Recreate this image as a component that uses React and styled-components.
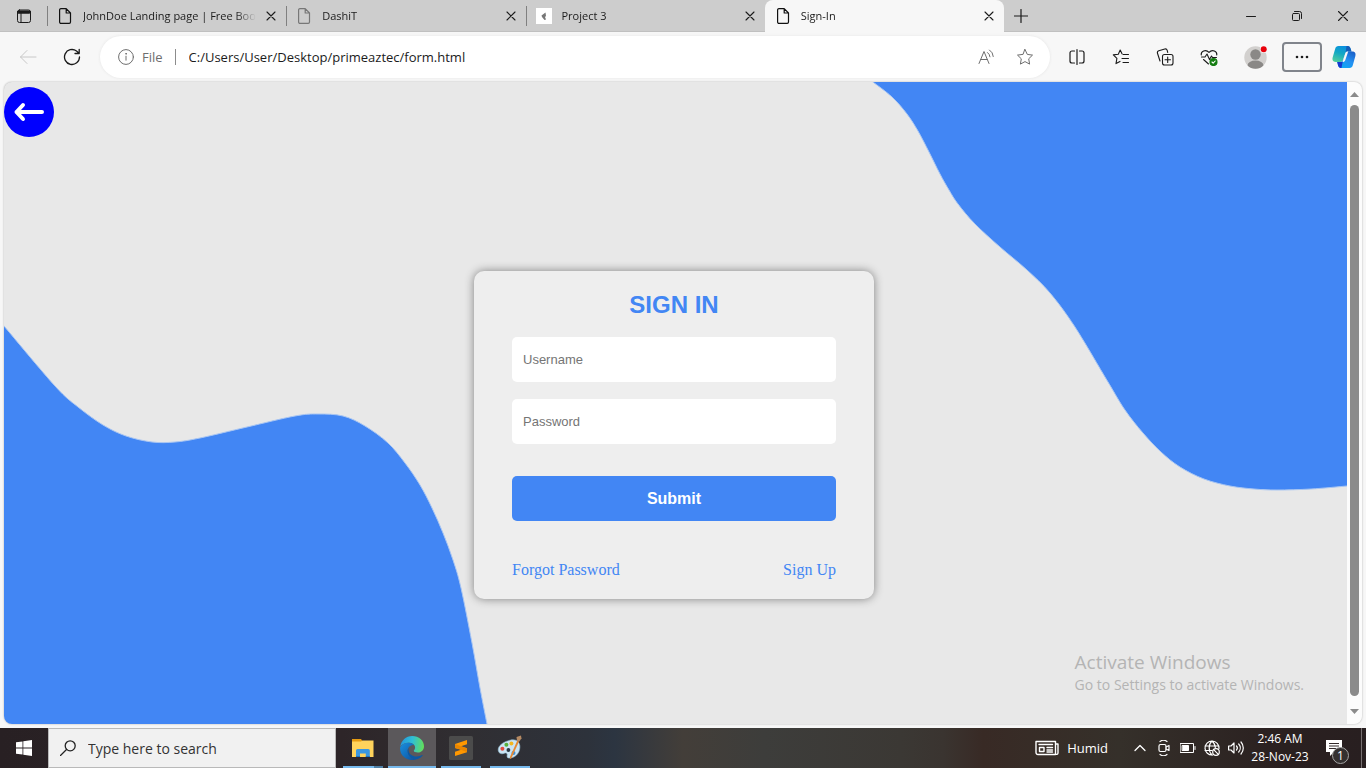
import React from "react";
import styled, { createGlobalStyle, css } from "styled-components";

const ui = '"Open Sans", "Noto Sans", sans-serif';
const arial = '"Liberation Sans", Arial, sans-serif';
const serif = '"Liberation Serif", "Times New Roman", serif';
const blue = "#4286f4";

const GlobalStyle = createGlobalStyle`
  *, *::before, *::after { box-sizing: border-box; }
  body { margin: 0; font-family: ${ui}; color: #1b1b1b; }
  button, input { font: inherit; color: inherit; border: 0; background: none; padding: 0; margin: 0; outline: 0; }
  svg { display: block; flex: none; }
`;

const Desktop = styled.div`
  min-height: 100vh;
  display: flex;
  flex-direction: column;
  background: #f7f7f7;
`;

/* ---------- tab strip ---------- */
const TabStrip = styled.header`
  display: flex;
  height: 32px;
  background: #cdcdcd;
  box-shadow: inset 0 -1px 0 #c0c0c0;
`;

const IconButton = styled.button`
  display: flex;
  flex: none;
  align-items: center;
  justify-content: center;
  width: ${(p) => p.$width || 44}px;
  color: ${(p) => p.$color || "#1b1b1b"};
`;

const TabList = styled.nav`
  display: flex;
  flex: 0 1 957px;
  min-width: 0;
`;

const TabItem = styled.div`
  position: relative;
  display: flex;
  align-items: center;
  flex: 1 1 0;
  min-width: 0;
  padding: 0 10px;
  gap: 10px;
  font-size: 11px;
  ${(p) =>
    p.$active
      ? css`
          background: #f7f7f7;
          border-radius: 8px 8px 0 0;
        `
      : css`
          &::before {
            content: "";
            position: absolute;
            left: 0;
            top: 6px;
            height: 20px;
            width: 1px;
            background: #808080;
          }
        `}
`;

const TabTitle = styled.span`
  flex: 1;
  min-width: 0;
  overflow: hidden;
  white-space: nowrap;
  line-height: 16px;
  mask-image: linear-gradient(to right, #000 calc(100% - 20px), transparent);
`;

const TabClose = styled.button`
  display: flex;
  align-items: center;
  justify-content: center;
  width: 10px;
  height: 16px;
`;

const Favicon = styled.span`
  display: flex;
  width: 16px;
  height: 16px;
  justify-content: center;
  background: #fff;
`;

const WindowControls = styled.div`
  display: flex;
  margin-left: auto;
`;

/* ---------- toolbar ---------- */
const Toolbar = styled.div`
  display: flex;
  align-items: stretch;
  height: 50px;
  padding: 4px 10px 4px 6px;
`;

const AddressBar = styled.label`
  display: flex;
  flex: 1;
  min-width: 0;
  align-items: center;
  margin: 0 5px 0 6px;
  padding: 0 6px 0 18px;
  border-radius: 21px;
  background: #fff;
  box-shadow: 0 0 3px #e4e4e4;
  font-size: 13px;
`;

const Scheme = styled.span`
  margin: 0 12px 0 8px;
  color: #6e6e6e;
`;

const Divider = styled.span`
  width: 1px;
  height: 16px;
  margin-right: 13px;
  background: #8c8c8c;
`;

const AddressInput = styled.input`
  flex: 1;
  min-width: 0;
`;

const MenuButton = styled.button`
  display: flex;
  align-items: center;
  justify-content: center;
  align-self: center;
  width: 40px;
  height: 30px;
  margin: 0 10px 0 4px;
  border: 2px solid #80848b;
  border-radius: 4px;
`;

/* ---------- web page ---------- */
const Viewport = styled.div`
  display: flex;
  flex: 1;
  position: relative;
  margin: 0 4px 4px;
  border-radius: 8px;
  overflow: hidden;
  background: #e8e8e8;
  box-shadow: 0 0 2px #a8a8a8;
`;

const Page = styled.main`
  position: relative;
  display: flex;
  flex: 1;
  flex-direction: column;
  align-items: center;
  min-width: 0;
  padding: 5px 3px 125px 0;
`;

const Waves = styled.svg`
  position: absolute;
  inset: 0;
  width: 100%;
  height: 100%;
`;

const BackLink = styled.a`
  position: relative;
  display: flex;
  align-items: center;
  justify-content: center;
  align-self: flex-start;
  width: 50px;
  height: 50px;
  border-radius: 50%;
  background: #0000ff;
`;

const Card = styled.form`
  position: relative;
  display: flex;
  flex-direction: column;
  width: 100%;
  max-width: 400px;
  margin-top: 134px;
  padding: 20px 38px;
  border-radius: 10px;
  background: #eee;
  box-shadow: 0 0 10px #808080;
`;

const Title = styled.h1`
  margin: 0 0 18px;
  font: bold 24px/28px ${arial};
  text-align: center;
  color: ${blue};
`;

const Field = styled.input`
  height: 45px;
  margin-bottom: 17px;
  padding: 0 11px;
  border-radius: 5px;
  background: #fff;
  font: 13px ${arial};
  &::placeholder { color: #757575; opacity: 1; }
`;

const Submit = styled.button`
  height: 45px;
  margin-top: 15px;
  border-radius: 5px;
  background: ${blue};
  color: #fff;
  font: bold 16px ${arial};
`;

const Links = styled.div`
  display: flex;
  justify-content: space-between;
  margin-top: 40px;
  font: 16px/18px ${serif};
`;

const TextLink = styled.a`
  color: ${blue};
  text-decoration: none;
`;

const Scrollbar = styled.div`
  display: flex;
  flex-direction: column;
  align-items: center;
  justify-content: space-between;
  width: 15px;
  padding: 10px 0;
  background: #fcfcfc;
`;

const Thumb = styled.span`
  flex: 1;
  width: 9px;
  margin: 8px 0 13px;
  border-radius: 5px;
  background: #8b8b8b;
`;

const Watermark = styled.aside`
  position: absolute;
  right: 58px;
  bottom: 29px;
  color: #b4b4b4;
  font-size: 14px;
  line-height: 20px;
`;

const WatermarkTitle = styled.div`
  font-size: 19px;
  line-height: 26px;
`;

/* ---------- taskbar ---------- */
const Taskbar = styled.footer`
  display: flex;
  height: 40px;
  color: #fff;
  background: linear-gradient(90deg, #282023 0%, #2d2528 25%, #302e32 34%, #2d323b 43%, #2c3541 45%, #433e39 50%, #3d3d3b 56%, #3b3834 66%, #3a3430 69%, #382a25 72%, #35302a 82%, #2a2020 94%, #281f20 100%);
`;

const SearchBox = styled.label`
  display: flex;
  flex: 0 1 288px;
  min-width: 0;
  align-items: center;
  gap: 12px;
  padding: 0 11px;
  border: 1px solid #b9b9b9;
  background: #f1f1f1;
  color: #222;
  font-size: 14px;
`;

const SearchInput = styled.input`
  flex: 1;
  min-width: 0;
  &::placeholder { color: #333; opacity: 1; }
`;

const Apps = styled.nav`
  display: flex;
  gap: 1px;
  margin-left: 3px;
`;

const AppButton = styled.button`
  display: flex;
  position: relative;
  align-items: center;
  justify-content: center;
  width: 48px;
  background: ${(p) => (p.$active ? "#5b585b" : "transparent")};
  &::after {
    content: "";
    position: absolute;
    bottom: 0;
    left: ${(p) => (p.$active ? 0 : 4)}px;
    right: ${(p) => (p.$active ? 0 : 4)}px;
    height: 2px;
    background: ${(p) => (p.$stacked ? "linear-gradient(90deg, #76b9ed 78%, #4f80a6 78%)" : "#76b9ed")};
  }
`;

const Tray = styled.div`
  display: flex;
  align-items: center;
  margin-left: auto;
  padding-right: 4px;
`;

const Weather = styled.button`
  display: flex;
  align-items: center;
  gap: 8px;
  margin-right: 20px;
  font-size: 13px;
`;

const Clock = styled.time`
  width: 64px;
  font-size: 12px;
  line-height: 18px;
  text-align: center;
  white-space: nowrap;
`;

const Notifications = styled.button`
  position: relative;
  display: flex;
  align-items: center;
  justify-content: center;
  width: 48px;
  height: 40px;
  padding-right: 8px;
  margin-left: 2px;
  border-right: 1px solid #777071;
`;

const Badge = styled.span`
  position: absolute;
  left: 18px;
  bottom: 4px;
  width: 17px;
  height: 17px;
  border: 1px solid #a5a5a5;
  border-radius: 50%;
  background: #343030;
  font-size: 12px;
  line-height: 15px;
`;

/* ---------- drawings ---------- */
const Line = ({ w = 16, h = 16, s = 1, children, ...rest }) => (
  <svg width={w} height={h} viewBox={`0 0 ${w} ${h}`} fill="none" stroke="currentColor" strokeWidth={s} strokeLinecap="round" strokeLinejoin="round" aria-hidden="true" {...rest}>
    {children}
  </svg>
);

const DocIcon = ({ color = "#111" }) => (
  <Line color={color} s={1.2}>
    <path d="M4 .7h5.2L13.500 5v9a1.300 1.300 0 0 1-1.300 1.300H4A1.300 1.300 0 0 1 2.600 14V2A1.300 1.300 0 0 1 4 .7ZM9.200 .9V5h4.200" />
  </Line>
);

const CloseIcon = ({ size = 8 }) => (
  <Line w={10} h={10} s={1.1}>
    <path d={size === 8 ? "M1 1l8 8M9 1l-8 8" : "M.5 .5l9 9M9.500 .5l-9 9"} />
  </Line>
);

const CopilotIcon = () => (
  <svg width="24" height="24" viewBox="0 0 24 24" aria-hidden="true">
    <defs>
      <linearGradient id="cpa" x1=".6" y1="0" x2=".2" y2="1">
        <stop offset="0" stopColor="#0a8fe0" />
        <stop offset=".45" stopColor="#12a7c4" />
        <stop offset="1" stopColor="#53cf9c" />
      </linearGradient>
      <linearGradient id="cpb" x1=".8" y1="0" x2=".2" y2="1">
        <stop offset="0" stopColor="#1b61c9" />
        <stop offset=".5" stopColor="#2390f2" />
        <stop offset="1" stopColor="#0ca9f4" />
      </linearGradient>
    </defs>
    <path d="M6.500 1h9.300c1.600 0 2.200 1 2.700 2.500l1 3h-3.700c-1.500 0-2.200.9-2.700 2.500l-1.800 5.500c-.5 1.600-1.300 2.500-2.900 2.500H3.600C.8 17 0 14.800.7 12.300L3.200 3.700C3.700 2 4.700 1 6.500 1Z" fill="url(#cpa)" />
    <path d="M14.500 1h1.300c1.600 0 2.200 1 2.700 2.500l1 3h-3.700c-1 0-1.700.5-2.200 1.300Z" fill="#155eb8" />
    <path d="M17.500 23H9c-1.700 0-2.400-1-2.900-2.500L5.200 17h3.200c1.600 0 2.400-.9 2.900-2.500L13.100 9c.5-1.600 1.200-2.500 2.700-2.500h4.600c2.800 0 3.600 2.200 2.900 4.700l-2.500 9.100c-.5 1.700-1.500 2.700-3.300 2.700Z" fill="url(#cpb)" />
    <path d="M5.200 17h3.200c1.200 0 2-.5 2.500-1.500L9.500 23H9c-1.700 0-2.400-1-2.900-2.500Z" fill="#1638cf" />
    <path d="M10.500 17 13.200 8.500c.4-1.200 1-2 2.300-2h.7l-2.900 8.500c-.5 1.400-1.300 2-2.800 2Z" fill="#f7f7f7" />
  </svg>
);

const WindowsLogo = () => (
  <svg width="16" height="16" viewBox="0 0 16 16" fill="#fff" aria-hidden="true">
    <path d="M0 2.300 6.500 1.400v6.200H0ZM7.300 1.300 16 0v7.600H7.300ZM0 8.400h6.500v6.200L0 13.700ZM7.300 8.400H16V16l-8.700-1.300Z" />
  </svg>
);

const ExplorerIcon = () => (
  <svg width="24" height="24" viewBox="0 0 24 24" aria-hidden="true">
    <path d="M1 3h9l1.500 2H22v6H1Z" fill="#e59b12" />
    <path d="M1 5.500h9L11.500 4.500H22.500V21H1Z" fill="#ffd35c" />
    <path d="M5 21v-6.500A1.500 1.500 0 0 1 6.500 13h10.800a1.500 1.500 0 0 1 1.500 1.500V21h-4v-3.500H9V21Z" fill="#3a97e0" />
    <path d="M5 20h4v1H5zM14.800 20h4v1h-4z" fill="#1b74c4" />
  </svg>
);

const EdgeIcon = () => (
  <svg width="24" height="24" viewBox="0 0 24 24" aria-hidden="true">
    <defs>
      <linearGradient id="eg" x1="0" y1=".4" x2="1" y2=".5">
        <stop offset="0" stopColor="#2396dc" />
        <stop offset=".5" stopColor="#30bfd5" />
        <stop offset="1" stopColor="#63df59" />
      </linearGradient>
      <linearGradient id="ed" x1="0" y1="0" x2="1" y2="1">
        <stop offset="0" stopColor="#1a8fdd" />
        <stop offset="1" stopColor="#0b4f9e" />
      </linearGradient>
    </defs>
    <path d="M.2 11C1 4.600 6 0 12.200 0 19 0 24 4.700 24 10.200c0 4-3 6.300-6.200 6.300-2.600 0-4-.8-4-1.700 0-.6 1.300-1.300 1.300-3.300C15.100 8.500 12 6.800 8.500 6.800 4.500 6.800 1.600 8.500.2 11Z" fill="url(#eg)" />
    <path d="M.1 11.400C1.600 8.400 4.800 6.700 8.400 6.700c2.400 0 4.400.8 5.600 2.200C10.700 8.700 7.600 11 7.600 14.700c0 4.600 3.700 9 9.200 8.300C15.500 23.600 13.900 24 12 24 5 24-.4 18.500.1 11.400Z" fill="url(#ed)" />
    <path d="M8.900 12.200c-1.700 5.100 3.300 8.500 7.900 8.300 2.200-.1 4-.9 5.300-1.500.5-.2.800.2.500.6-1 1.400-2.700 2.800-4.900 3.500C12.300 24.300 7.600 19.800 7.600 14.900c0-1 .5-2 1.300-2.700Z" fill="#0c59a4" />
  </svg>
);

const SublimeIcon = () => (
  <svg width="24" height="24" viewBox="0 0 24 24" aria-hidden="true">
    <rect width="24" height="24" rx="1.500" fill="#4b4b4b" />
    <path d="M6 8 18 4v4.300l-6 2 6 1.900v4.100L6 20v-4.200l6-2-6-1.900Z" fill="#ff9800" />
    <path d="m6 11.900 6 1.900 6 2.300v-3.900l-6-1.900-6-2.300Z" fill="#e98600" />
  </svg>
);

const PaintIcon = () => (
  <svg width="26" height="26" viewBox="0 0 26 26" aria-hidden="true">
    <path d="M13 5.200c6-1.600 10 1.600 9.900 6.800-.1 6.500-5.300 11.300-11 11.100-2-.1-2-1.600-1.700-3 .3-1.700-1-2.600-2.700-1.900-2.500 1-5.500.8-6.200-2.400C.3 10.900 6.300 6.800 13 5.200Z" fill="#cbe5f4" stroke="#8fb8d0" strokeWidth=".6" />
    <circle cx="5.400" cy="13.700" r="2" fill="#e24b3e" />
    <circle cx="9.400" cy="9.800" r="2" fill="#58b13c" />
    <circle cx="14.400" cy="8.600" r="2" fill="#f3b61f" />
    <circle cx="11.400" cy="15" r="1.900" fill="#2b3945" />
    <circle cx="16.500" cy="18" r="2" fill="#3b8fda" />
    <path d="M20.300 5.500 22 6.400 14.500 23l-1.700 1.200.2-2.200Z" fill="#e58a35" />
    <path d="M19.500 2 24 .5l.5 2.700-2.300 3.600-2.200-1.100Z" fill="#b58a63" />
  </svg>
);

/* Turns a list of points into one smooth cubic curve. */
const smooth = (pts) =>
  pts.slice(0, -1).reduce((d, p, i) => {
    const a = pts[i - 1] || p;
    const n = pts[i + 1];
    const b = pts[i + 2] || n;
    return `${d}C${p[0] + (n[0] - a[0]) / 6} ${p[1] + (n[1] - a[1]) / 6} ${n[0] - (b[0] - p[0]) / 6} ${n[1] - (b[1] - p[1]) / 6} ${n[0]} ${n[1]}`;
  }, `M${pts[0][0]} ${pts[0][1]}`);

const leftWave = [[0, 244], [51, 304], [74, 325], [99, 343], [122, 354], [148, 360], [171, 360], [196, 356], [243, 345], [291, 334], [314, 332], [339, 334], [361, 344], [384, 361], [401, 381], [416, 403], [428, 426], [439, 451], [449, 478], [457, 506], [468, 561], [476, 606], [483, 642]];
const rightWave = [[869, 0], [888, 15], [903, 32], [914, 49], [925, 70], [936, 92], [945, 108], [954, 122], [971, 142], [996, 165], [1023, 188], [1046, 211], [1071, 245], [1104, 300], [1121, 328], [1139, 351], [1157, 370], [1176, 385], [1200, 397], [1226, 404], [1250, 407], [1273, 408], [1307, 407], [1343, 404]];

const tabs = [
  { title: "JohnDoe Landing page | Free Boo", icon: <DocIcon /> },
  { title: "DashiT", icon: <DocIcon color="#777" /> },
  {
    title: "Project 3",
    icon: (
      <Favicon>
        <svg width="16" height="16" viewBox="0 0 16 16"><path d="m9.500 4.500-4 3 .5 1.500 2.500 3 1.500-.5-1-2.500 1-1Z" fill="#777" /></svg>
      </Favicon>
    ),
  },
  { title: "Sign-In", icon: <DocIcon />, active: true },
];

export default function App() {
  return (
    <Desktop>
      <GlobalStyle />
      <TabStrip>
        <IconButton $width={47} aria-label="Tab actions">
          <Line><rect x="1.500" y="2" width="13" height="12.500" rx="2" /><path d="M1.500 3.500h13M2 5h12M5 5v9" /><path d="M2.500 3h11v2h-11z" fill="currentColor" /></Line>
        </IconButton>
        <TabList aria-label="Open tabs">
          {tabs.map((t) => (
            <TabItem key={t.title} $active={t.active}>
              {t.icon}
              <TabTitle>{t.title}</TabTitle>
              <TabClose aria-label={`Close ${t.title}`}><CloseIcon /></TabClose>
            </TabItem>
          ))}
        </TabList>
        <IconButton $width={34} aria-label="New tab">
          <Line w={14} h={14} s={1.2}><path d="M7 .5v13M.5 7h13" /></Line>
        </IconButton>
        <WindowControls>
          <IconButton $width={46} aria-label="Minimize"><Line w={10} h={10}><path d="M.5 5.500h9" /></Line></IconButton>
          <IconButton $width={46} aria-label="Restore">
            <Line w={10} h={10}><rect x=".5" y="2.500" width="7" height="7" rx="1" /><path d="M2.500 .5h5a2 2 0 0 1 2 2v5" /></Line>
          </IconButton>
          <IconButton $width={46} aria-label="Close window"><CloseIcon size={9} /></IconButton>
        </WindowControls>
      </TabStrip>

      <Toolbar>
        <IconButton aria-label="Back" $color="#c8c8c8"><Line w={18}><path d="M17 8H1.500M8 1.500 1.500 8 8 14.500" /></Line></IconButton>
        <IconButton aria-label="Refresh">
          <Line w={18} h={18} s={1.3}><path d="M16.500 9A7.500 7.500 0 1 1 13.500 3L16 5.200M16.200 1.300v4.200H12" /></Line>
        </IconButton>
        <AddressBar>
          <Line color="#6e6e6e"><circle cx="8" cy="8" r="7.400" /><path d="M8 7.200v4" /><circle cx="8" cy="4.800" r=".4" /></Line>
          <Scheme>File</Scheme>
          <Divider />
          <AddressInput aria-label="Address" defaultValue="C:/Users/User/Desktop/primeaztec/form.html" />
          <IconButton aria-label="Read aloud" $width={39} $color="#6e6e6e">
            <Line><path d="m1 14.500 5-12 5 12M2.700 10.500h6.500M9.500 3.500a6 6 0 0 1 2.500 4.300M11.500 1a8.500 8.500 0 0 1 3.800 6.500" /></Line>
          </IconButton>
          <IconButton aria-label="Add to favorites" $width={39} $color="#6e6e6e">
            <Line w={18} h={18}><path d="m9 1.500 2.300 4.900 5.200.7-3.800 3.700.9 5.300L9 13.600l-4.600 2.500.9-5.300L1.500 7.100l5.200-.7Z" /></Line>
          </IconButton>
        </AddressBar>
        <IconButton aria-label="Split screen">
          <Line w={18} h={18} s={1.2}><path d="M6.500 3H4a2 2 0 0 0-2 2v8a2 2 0 0 0 2 2h2.500M11.500 3H14a2 2 0 0 1 2 2v8a2 2 0 0 1-2 2h-2.500M9 1.500v15" /></Line>
        </IconButton>
        <IconButton aria-label="Favorites">
          <Line w={18} h={18} s={1.1}><path d="M10 5.800 8.200 2 6.300 6.200l-5 .7 3.600 3.500-.9 5.200 4-2.200M11 6.500h5.500M10 10.500h6.500M11 14.500h5.500" /></Line>
        </IconButton>
        <IconButton aria-label="Collections">
          <Line w={18} h={18} s={1.1}><rect x="6.500" y="6.500" width="10.500" height="10.500" rx="2" /><path d="M11.700 9v5.500M9 11.700h5.500M4 13 1.400 5A2 2 0 0 1 2.800 2.700l6-1.700a2 2 0 0 1 2.400 1.400l.5 2" /></Line>
        </IconButton>
        <IconButton aria-label="Browser essentials">
          <Line w={18} h={18} s={1.1}>
            <path d="M1.200 7C.8 3.500 5.500.8 9 4.300 12.500.8 17.200 3.500 16.800 7M1.500 9H5l2-3 2.500 5.500L11.500 8l1 1.500h4M3.500 11.500 8.500 16" />
            <circle cx="13.500" cy="14" r="3.500" fill="#137c10" stroke="#137c10" /><path d="m12 14 1.200 1.200 2-2.200" stroke="#fff" />
          </Line>
        </IconButton>
        <IconButton aria-label="Profile" $width={47}>
          <svg width="24" height="24" viewBox="-1 0 24 24">
            <clipPath id="pf"><circle cx="11.500" cy="12.500" r="11.200" /></clipPath>
            <g clipPath="url(#pf)"><rect width="24" height="24" fill="#d2d0ce" /><circle cx="11.500" cy="9.500" r="5.200" fill="#8a8886" /><ellipse cx="11.500" cy="20.500" rx="8" ry="5" fill="#8a8886" /></g>
            <circle cx="19.700" cy="4.200" r="3.700" fill="#f7f7f7" /><circle cx="19.700" cy="4.200" r="3" fill="#e8000b" />
          </svg>
        </IconButton>
        <MenuButton aria-label="Settings and more">
          <svg width="14" height="4" viewBox="0 0 14 4" fill="#1b1b1b"><circle cx="2" cy="2" r="1.300" /><circle cx="7" cy="2" r="1.300" /><circle cx="12" cy="2" r="1.300" /></svg>
        </MenuButton>
        <IconButton $width={24} aria-label="Copilot"><CopilotIcon /></IconButton>
      </Toolbar>

      <Viewport>
        <Page>
          <Waves viewBox="0 0 1343 642" preserveAspectRatio="none" fill={blue} stroke="#a9c6f3" strokeWidth="1" aria-hidden="true">
            <path d={`${smooth(leftWave)}L483 650H-5V238Z`} />
            <path d={`${smooth(rightWave)}L1350 403V-5H862Z`} />
          </Waves>
          <BackLink href="#" aria-label="Go back">
            <Line w={32} h={22} s={4} color="#fff"><path d="M29 11H3.500M10 4 3.500 11l6.500 7" /></Line>
          </BackLink>
          <Card onSubmit={(e) => e.preventDefault()}>
            <Title>SIGN IN</Title>
            <Field aria-label="Username" placeholder="Username" />
            <Field aria-label="Password" placeholder="Password" type="password" />
            <Submit>Submit</Submit>
            <Links>
              <TextLink href="#">Forgot Password</TextLink>
              <TextLink href="#">Sign Up</TextLink>
            </Links>
          </Card>
        </Page>
        <Scrollbar aria-hidden="true">
          <svg width="9" height="5" viewBox="0 0 9 5" fill="#8b8b8b"><path d="M0 5 4.500 0 9 5Z" /></svg>
          <Thumb />
          <svg width="9" height="5" viewBox="0 0 9 5" fill="#8b8b8b"><path d="M0 0h9L4.500 5Z" /></svg>
        </Scrollbar>
        <Watermark>
          <WatermarkTitle>Activate Windows</WatermarkTitle>
          Go to Settings to activate Windows.
        </Watermark>
      </Viewport>

      <Taskbar>
        <IconButton $width={48} aria-label="Start"><WindowsLogo /></IconButton>
        <SearchBox>
          <Line s={1.3}><circle cx="10.200" cy="5.800" r="5" /><path d="m6.500 9.500-6 6" /></Line>
          <SearchInput aria-label="Search" placeholder="Type here to search" />
        </SearchBox>
        <Apps aria-label="Running apps">
          <AppButton $stacked aria-label="File Explorer"><ExplorerIcon /></AppButton>
          <AppButton $active aria-label="Microsoft Edge"><EdgeIcon /></AppButton>
          <AppButton aria-label="Sublime Text"><SublimeIcon /></AppButton>
          <AppButton aria-label="Paint"><PaintIcon /></AppButton>
        </Apps>
        <Tray>
          <Weather>
            <Line w={24} h={16} s={1.4}><path d="M1 1.500h19.500v13H3a2 2 0 0 1-2-2ZM20.500 4H23v9a1.500 1.500 0 0 1-2.500 1M4 4.500h13.500M12 7.500h5.500M12 10h5.500M12 12h5.500" /><path d="M4.500 7.500h4.500v4H4.500z" /></Line>
            Humid
          </Weather>
          <IconButton $width={24} $color="#fff" aria-label="Show hidden icons"><Line w={12} h={8} s={1.3}><path d="m1 6.500 5-5 5 5" /></Line></IconButton>
          <IconButton $width={24} $color="#fff" aria-label="Meet now">
            <Line s={1.2}><rect x="3" y="4.500" width="7" height="7" rx="1.500" /><path d="m10 7 3-1.500v5L10 9M4 1.500c2-1.500 5-1.500 7 0M4 14.500c2 1.500 5 1.500 7 0" /></Line>
          </IconButton>
          <IconButton $width={24} $color="#fff" aria-label="Battery">
            <Line><path d="M.5 3.500h13v9H.5zM15 6.500v3" /><path d="M2.500 5.500h6v5h-6z" fill="currentColor" /></Line>
          </IconButton>
          <IconButton $width={24} $color="#fff" aria-label="Network">
            <Line s={1.2}><path d="M8.500 15A7 7 0 1 1 15 8.500M1 6h13.500M1 10.500h7M8 1C4.500 4 4 11 8 15M8 1c2.300 2 3.200 4 3.300 6.500" /><circle cx="12" cy="12" r="3.300" /><path d="m9.700 9.700 4.600 4.600" /></Line>
          </IconButton>
          <IconButton $width={24} $color="#fff" aria-label="Volume">
            <Line s={1.2}><path d="M.6 6H3l3-3v10l-3-3H.6ZM8.500 6a3 3 0 0 1 0 4M10.700 4a6 6 0 0 1 0 8M13 2a9 9 0 0 1 0 12" /></Line>
          </IconButton>
          <Clock>2:46 AM<br />28-Nov-23</Clock>
          <Notifications aria-label="Notifications, 1 new">
            <svg width="16" height="16" viewBox="0 0 16 16"><path d="M0 0h16v12H8l-4 4v-4H0Z" fill="#fff" /><path d="M3 3.500h10M3 6h10M3 8.500h7" stroke="#332a2a" /></svg>
            <Badge>1</Badge>
          </Notifications>
        </Tray>
      </Taskbar>
    </Desktop>
  );
}
